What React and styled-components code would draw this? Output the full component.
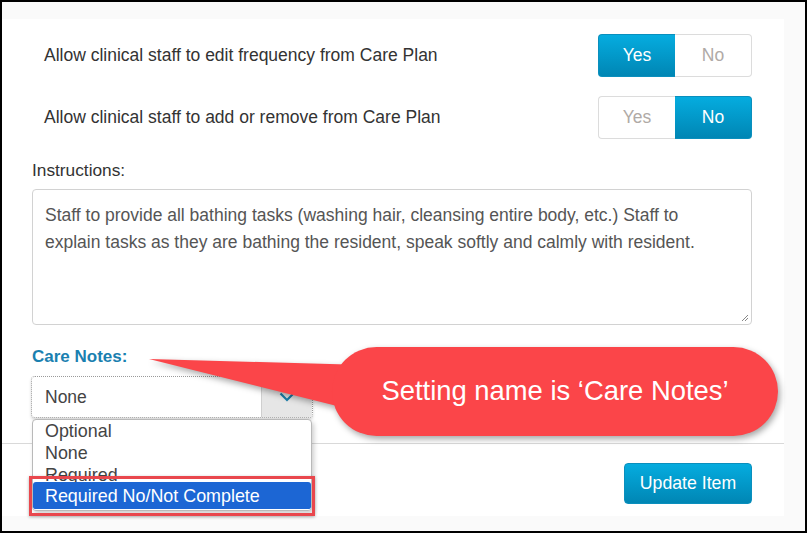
import React from 'react';
import styled, { createGlobalStyle } from 'styled-components';

const GlobalStyle = createGlobalStyle`
  html, body {
    margin: 0;
    padding: 0;
    background: #fff;
  }
  body {
    font-family: "Liberation Sans", Arial, sans-serif;
  }
`;

const Frame = styled.div`
  position: relative;
  box-sizing: border-box;
  width: 807px;
  height: 533px;
  border: 2px solid #000;
  background: #fafafa;
  padding-top: 17px;
  overflow: hidden;
`;

const Panel = styled.div`
  width: 782px;
  background: #fff;
`;

const Body = styled.div`
  padding: 15px 32px 25px 30px;
  display: flex;
  flex-direction: column;
`;

const SettingRow = styled.div`
  display: flex;
  align-items: center;
  justify-content: space-between;
  padding-left: 12px;
  margin-bottom: ${(p) => p.gap || 0}px;
`;

const SettingText = styled.span`
  font-size: 17.5px;
  color: #333;
`;

const Toggle = styled.div`
  display: flex;
  width: 154px;
  height: 43px;
`;

const Segment = styled.div`
  flex: 1;
  display: flex;
  align-items: center;
  justify-content: center;
  font-size: 17.5px;
  box-sizing: border-box;
  color: ${(p) => (p.active ? '#fff' : '#b0aaa6')};
  background: ${(p) =>
    p.active ? 'linear-gradient(#05acdf, #0086b4)' : '#fff'};
  border: 1px solid ${(p) => (p.active ? '#0a8fbd' : '#dcdcdc')};
  border-radius: ${(p) => (p.side === 'left' ? '4px 0 0 4px' : '0 4px 4px 0')};
  ${(p) => (p.side === 'left' ? 'border-right: none;' : 'border-left: none;')}
`;

const Label = styled.div`
  font-size: 17.3px;
  color: #333;
  margin: 21px 0 8px;
`;

const TextArea = styled.div`
  position: relative;
  box-sizing: border-box;
  height: 136px;
  border: 1px solid #d2d2d2;
  border-radius: 4px;
  padding: 12px 40px 12px 12px;
  font-size: 17.5px;
  line-height: 27px;
  color: #555;
`;

const Grip = styled.svg`
  position: absolute;
  right: 2px;
  bottom: 2px;
`;

const NotesLabel = styled.div`
  font-size: 17px;
  font-weight: bold;
  color: #1a80b0;
  margin: 22px 0 9px;
`;

const SelectWrap = styled.div`
  position: relative;
  width: 282px;
  margin-left: -1px;
`;

const Select = styled.div`
  display: flex;
  box-sizing: border-box;
  height: 42px;
  border: 1px dotted #9a9a9a;
  border-radius: 4px;
  box-shadow: 0 2px 3px rgba(0, 0, 0, 0.15);
  overflow: hidden;
`;

const SelectValue = styled.div`
  flex: 1;
  display: flex;
  align-items: center;
  padding-left: 13px;
  font-size: 17.5px;
  color: #444;
`;

const SelectArrow = styled.div`
  width: 50px;
  display: flex;
  align-items: center;
  justify-content: center;
  background: #e6e6e6;
  border-left: 1px solid #cfcfcf;
`;

const OptionList = styled.div`
  position: absolute;
  top: 43px;
  left: 1px;
  width: 280px;
  box-sizing: border-box;
  background: #fff;
  border: 1px solid #b9b9b9;
  border-radius: 4px;
  box-shadow: 2px 3px 5px rgba(0, 0, 0, 0.2);
  z-index: 2;
`;

const Option = styled.div`
  position: relative;
  font-size: 17.9px;
  line-height: 22px;
  color: #444;
  padding-left: 12px;
  white-space: nowrap;
`;

const ActiveOption = styled(Option)`
  margin-top: -4px;
  padding: 3px 12px 2px;
  background: #1c66d4;
  color: #fff;
  border-radius: 3px;
  border-bottom: 1px solid #fff;
`;

const Highlight = styled.div`
  position: absolute;
  top: -6px;
  left: -4px;
  right: -4px;
  bottom: -7px;
  border: 3px solid #e9474d;
  box-shadow: 0 1px 3px rgba(0, 0, 0, 0.3);
`;

const Footer = styled.div`
  border-top: 1px solid #d9d9d9;
  display: flex;
  justify-content: flex-end;
  padding: 19px 32px 12px 0;
`;

const Button = styled.button`
  width: 128px;
  height: 41px;
  border: 1px solid #0a8fbd;
  border-radius: 4px;
  background: linear-gradient(#05acdf, #0086b4);
  color: #fff;
  font-family: "Liberation Sans", Arial, sans-serif;
  font-size: 17.7px;
  cursor: pointer;
`;

const Callout = styled.div`
  position: absolute;
  left: 143px;
  top: 341px;
  width: 640px;
  height: 100px;
`;

const CalloutShape = styled.svg`
  position: absolute;
  inset: 0;
  filter: drop-shadow(2px 3px 3px rgba(0, 0, 0, 0.35));
`;

const CalloutText = styled.div`
  position: absolute;
  left: 187px;
  top: 3px;
  width: 446px;
  height: 89px;
  display: flex;
  align-items: center;
  justify-content: center;
  font-size: 27.4px;
  color: #fff;
  white-space: nowrap;
`;

const YesNo = ({ value }) => (
  <Toggle>
    <Segment side="left" active={value === 'yes'}>Yes</Segment>
    <Segment side="right" active={value === 'no'}>No</Segment>
  </Toggle>
);

const Chevron = () => (
  <svg width="16" height="10" viewBox="0 0 16 10">
    <path d="M1.5 1.5 L8 8 L14.5 1.5" fill="none" stroke="#1a7fab" strokeWidth="2.2" />
  </svg>
);

export default function App() {
  return (
    <>
      <GlobalStyle />
      <Frame>
        <Panel>
          <Body>
            <SettingRow gap={19}>
              <SettingText>Allow clinical staff to edit frequency from Care Plan</SettingText>
              <YesNo value="yes" />
            </SettingRow>
            <SettingRow>
              <SettingText>Allow clinical staff to add or remove from Care Plan</SettingText>
              <YesNo value="no" />
            </SettingRow>
            <Label>Instructions:</Label>
            <TextArea>
              Staff to provide all bathing tasks (washing hair, cleansing entire body, etc.) Staff to
              explain tasks as they are bathing the resident, speak softly and calmly with resident.
              <Grip width="9" height="9" viewBox="0 0 9 9">
                <path d="M8 2 L2 8 M8 5 L5 8" stroke="#888" strokeWidth="1" />
              </Grip>
            </TextArea>
            <NotesLabel>Care Notes:</NotesLabel>
            <SelectWrap>
              <Select>
                <SelectValue>None</SelectValue>
                <SelectArrow>
                  <Chevron />
                </SelectArrow>
              </Select>
              <OptionList>
                <Option>Optional</Option>
                <Option>None</Option>
                <Option>Required</Option>
                <ActiveOption>
                  Required No/Not Complete
                  <Highlight />
                </ActiveOption>
              </OptionList>
            </SelectWrap>
          </Body>
          <Footer>
            <Button>Update Item</Button>
          </Footer>
        </Panel>
        <Callout>
          <CalloutShape width="640" height="100" viewBox="0 0 640 100">
            <path d="M4 16 L220 22 L220 70 Z" fill="#fb4549" />
            <rect x="187" y="4" width="446" height="89" rx="44.5" fill="#fb4549" />
          </CalloutShape>
          <CalloutText>Setting name is ‘Care Notes’</CalloutText>
        </Callout>
      </Frame>
    </>
  );
}
